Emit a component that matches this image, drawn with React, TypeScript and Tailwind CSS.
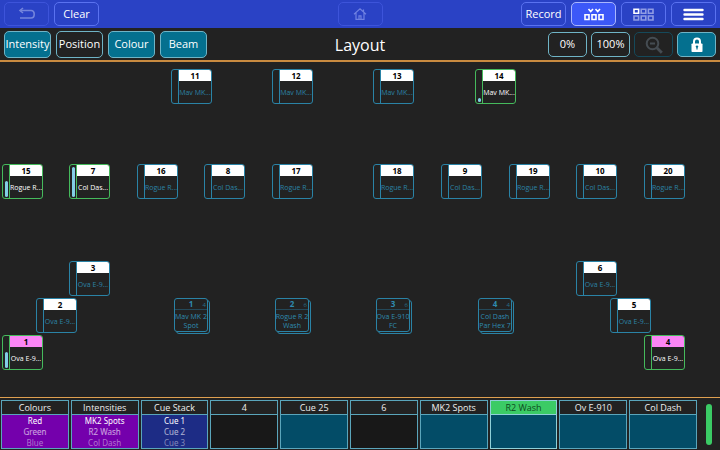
import type { ReactNode } from 'react';

type Fixture = {
  id: number;
  x: number;
  y: number;
  name: string;
  active?: boolean;
  level?: number;
  pink?: boolean;
};

const fixtures: Fixture[] = [
  { id: 11, x: 171, y: 7, name: 'Mav MK...' },
  { id: 12, x: 272, y: 7, name: 'Mav MK...' },
  { id: 13, x: 373, y: 7, name: 'Mav MK...' },
  { id: 14, x: 475, y: 7, name: 'Mav MK...', active: true, level: 4 },
  { id: 15, x: 2, y: 102, name: 'Rogue R...', active: true, level: 16 },
  { id: 7, x: 69, y: 102, name: 'Col Das...', active: true, level: 30 },
  { id: 16, x: 137, y: 102, name: 'Rogue R...' },
  { id: 8, x: 204, y: 102, name: 'Col Das...' },
  { id: 17, x: 272, y: 102, name: 'Rogue R...' },
  { id: 18, x: 373, y: 102, name: 'Rogue R...' },
  { id: 9, x: 441, y: 102, name: 'Col Das...' },
  { id: 19, x: 509, y: 102, name: 'Rogue R...' },
  { id: 10, x: 576, y: 102, name: 'Col Das...' },
  { id: 20, x: 644, y: 102, name: 'Rogue R...' },
  { id: 3, x: 69, y: 199, name: 'Ova E-9...' },
  { id: 2, x: 36, y: 236, name: 'Ova E-9...' },
  { id: 1, x: 2, y: 273, name: 'Ova E-9...', active: true, level: 16, pink: true },
  { id: 6, x: 576, y: 199, name: 'Ova E-9...' },
  { id: 5, x: 610, y: 236, name: 'Ova E-9...' },
  { id: 4, x: 644, y: 273, name: 'Ova E-9...', active: true, pink: true },
];

const groups = [
  { id: 1, x: 174, count: 4, lines: ['Mav MK 2', 'Spot'] },
  { id: 2, x: 275, count: 6, lines: ['Rogue R 2', 'Wash'] },
  { id: 3, x: 376, count: 6, lines: ['Ova E-910', 'FC'] },
  { id: 4, x: 478, count: 4, lines: ['Col Dash', 'Par Hex 7'] },
];

const playbacks = [
  { title: 'Colours', body: 'bg-[#7400ac]', cues: ['Red', 'Green', 'Blue'] },
  { title: 'Intensities', body: 'bg-[#7400ac]', cues: ['MK2 Spots', 'R2 Wash', 'Col Dash'] },
  { title: 'Cue Stack', body: 'bg-[#1d2c85]', cues: ['Cue 1', 'Cue 2', 'Cue 3'] },
  { title: '4', body: 'bg-[#181818]', cues: [] },
  { title: 'Cue 25', body: 'bg-[#034c67]', cues: [] },
  { title: '6', body: 'bg-[#181818]', cues: [] },
  { title: 'MK2 Spots', body: 'bg-[#034c67]', cues: [] },
  { title: 'R2 Wash', body: 'bg-[#034c67]', cues: [], selected: true },
  { title: 'Ov E-910', body: 'bg-[#034c67]', cues: [] },
  { title: 'Col Dash', body: 'bg-[#034c67]', cues: [] },
];

const cueTones = ['text-white', 'text-white/65', 'text-white/45'];

function TopButton({ children, label, tone = 'border-[#5a72f0]' }: { children: ReactNode; label: string; tone?: string }) {
  return (
    <button aria-label={label} className={`flex h-6 w-[45px] shrink-0 items-center justify-center rounded-[5px] border text-[11px] text-white ${tone}`}>
      {children}
    </button>
  );
}

function FilterButton({ label, on = true }: { label: string; on?: boolean }) {
  return (
    <button
      aria-pressed={on}
      className={`flex h-[27px] w-[47px] items-center justify-center whitespace-nowrap rounded-[5px] border border-[#6fb4c6] pt-px text-[11px] text-white ${on ? 'bg-[#04708f]' : 'bg-[#222222]'}`}
    >
      {label}
    </button>
  );
}

function ToolButton({ children, label, tone = 'border-[#6fb4c6]' }: { children: ReactNode; label: string; tone?: string }) {
  return (
    <button aria-label={label} className={`flex h-[25px] w-[39px] items-center justify-center rounded-[5px] border pt-px text-[11px] text-white ${tone}`}>
      {children}
    </button>
  );
}

function FixtureTile({ fixture }: { fixture: Fixture }) {
  const { id, x, y, name, active, level, pink } = fixture;
  const edge = active ? 'border-[#45ba5c]' : 'border-[#2a83a6]';
  return (
    <button
      className={`absolute flex h-[35px] w-[41px] overflow-hidden rounded-[3px] border bg-[#222222] ${edge}`}
      style={{ left: x, top: y }}
    >
      <span className={`flex h-full w-[7px] shrink-0 items-end justify-center border-r pb-px ${edge}`}>
        {level ? <span className="w-[3px] rounded-full bg-[#83cde6]" style={{ height: level }} /> : null}
      </span>
      <span className="flex h-full min-w-0 flex-1 flex-col">
        <span className={`flex h-[11px] items-center justify-center text-[8px] leading-[11px] font-bold text-black ${pink ? 'bg-[#fb85f5]' : 'bg-white'}`}>
          {id}
        </span>
        <span className={`flex flex-1 items-center justify-center whitespace-nowrap pt-px text-[7px] leading-[10px] ${active ? 'text-white' : 'text-[#2c83a5]'}`}>
          {name}
        </span>
      </span>
    </button>
  );
}

function GroupTile({ group }: { group: (typeof groups)[number] }) {
  return (
    <button className="absolute top-[236px] h-9 w-9 text-[#2f8bb0]" style={{ left: group.x }}>
      <span className="absolute top-[2px] left-[2px] h-[34px] w-[34px] rounded-[3px] border border-[#2a83a6]" />
      <span className="absolute top-0 left-0 flex h-[34px] w-[34px] flex-col rounded-[3px] border border-[#2a83a6] bg-[#222222]">
        <span className="relative block h-[11px] border-b border-[#24495a] text-center text-[8px] leading-[10px] font-bold">
          {group.id}
          <span className="absolute top-px right-px text-[6px] font-normal text-[#28708c]">{group.count}</span>
        </span>
        <span className="flex flex-1 flex-col items-center justify-center whitespace-nowrap text-[7px] leading-[9px]">
          {group.lines.map((line) => (
            <span key={line}>{line}</span>
          ))}
        </span>
      </span>
    </button>
  );
}

export default function App() {
  return (
    <div className="flex min-h-screen flex-col bg-[#222222] font-['Open_Sans','Noto_Sans',sans-serif] text-white">
      <header className="grid h-7 grid-cols-[1fr_auto_1fr] items-center bg-[#2a42c5] px-1">
        <div className="flex gap-[5px]">
          <TopButton label="Undo" tone="border-[#3d54da]">
            <svg viewBox="0 0 18 14" className="h-[14px] w-[18px]" fill="none" stroke="#7485dc" strokeWidth="1.6">
              <path d="M2 3.5h11q3.200 0 3.200 3.700t-3.200 3.800H2" />
              <path d="M5 1 2 3.500 5 6" />
            </svg>
          </TopButton>
          <TopButton label="Clear">Clear</TopButton>
        </div>
        <TopButton label="Home" tone="border-[#3d54da]">
          <svg viewBox="0 0 14 14" className="h-[14px] w-[14px]" fill="none" stroke="#6f81e2" strokeWidth="1.200">
            <path d="M1 7.200 7 1.800l6 5.400M3 6v6.300h8V6M10.500 4.800V2.500" />
            <path d="M6 12.300V8.800h2v3.500" />
          </svg>
        </TopButton>
        <div className="flex justify-end gap-[5px]">
          <TopButton label="Record">Record</TopButton>
          <TopButton label="Layout view" tone="border-[#a9b6ff] bg-[#3c58f8]">
            <svg viewBox="0 0 20 13" className="h-[13px] w-5" fill="none" stroke="white" strokeWidth="1.600">
              <path d="m4.500 1 2.200 2.500L9 1M11.500 1l2.200 2.500L16 1" />
              <path d="M1 6.800h4v4.700H1zM8 6.800h4v4.700H8zM15 6.800h4v4.700h-4z" />
            </svg>
          </TopButton>
          <TopButton label="Grid view">
            <svg viewBox="0 0 21 13" className="h-[13px] w-[21px]" fill="none" stroke="#8f9ce4" strokeWidth="1.600">
              <path d="M8.200 1.300h4.600v4H8.200zM15.400 1.300H20v4h-4.600zM1 8h4.600v4H1zM8.200 8h4.600v4H8.200zM15.400 8H20v4h-4.600z" />
              <path d="M1 1.300h4.600v4H1z" stroke="white" />
            </svg>
          </TopButton>
          <TopButton label="Menu">
            <svg viewBox="0 0 21 13" className="h-[13px] w-[21px]" stroke="white" strokeWidth="2.400" strokeLinecap="round">
              <path d="M1.500 2h18M1.500 6.500h18M1.500 11h18" />
            </svg>
          </TopButton>
        </div>
      </header>

      <section className="grid h-[34px] grid-cols-[1fr_auto_1fr] items-center border-b-2 border-[#c98b40] px-1">
        <div className="flex gap-[5px]">
          <FilterButton label="Intensity" />
          <FilterButton label="Position" on={false} />
          <FilterButton label="Colour" />
          <FilterButton label="Beam" />
        </div>
        <h1 className="pt-[2px] text-[16px] leading-5">Layout</h1>
        <div className="flex justify-end gap-1">
          <ToolButton label="Zero percent">0%</ToolButton>
          <ToolButton label="Full percent">100%</ToolButton>
          <ToolButton label="Zoom out" tone="border-[#15495a]">
            <svg viewBox="0 0 18 18" className="h-[18px] w-[18px]" fill="none" stroke="#454c52" strokeWidth="2">
              <circle cx="7.500" cy="7.500" r="5.800" />
              <path d="M5 7.500h5" />
              <path d="m11.800 11.800 5 5" strokeWidth="2.800" />
            </svg>
          </ToolButton>
          <ToolButton label="Lock" tone="border-[#6fb4c6] bg-[#04708f]">
            <svg viewBox="0 0 12 15" className="h-[15px] w-3">
              <path d="M3 7V4.500a3 3 0 0 1 6 0V7" fill="none" stroke="white" strokeWidth="2" />
              <rect x="0.500" y="6.500" width="11" height="8.500" rx="0.800" fill="white" />
              <circle cx="6" cy="9.600" r="1.200" fill="#04708f" />
              <path d="M6 10v2.600" stroke="#04708f" strokeWidth="1.200" />
            </svg>
          </ToolButton>
        </div>
      </section>

      <main className="relative min-h-[312px] flex-1">
        {fixtures.map((f) => (
          <FixtureTile key={f.id} fixture={f} />
        ))}
        {groups.map((g) => (
          <GroupTile key={g.id} group={g} />
        ))}
      </main>

      <footer className="flex items-center gap-[9px] border-t border-[#e0a050] pt-[2px] pr-2 pb-px pl-px">
        <div className="grid flex-1 grid-cols-10 gap-[2px]">
          {playbacks.map((p) => (
            <button
              key={p.title}
              className={`flex h-[49px] min-w-0 flex-col border text-center ${p.selected ? 'border-[#8fd0d8]' : 'border-[#5aa5bb]'}`}
            >
              <span className={`h-[14px] w-full border-b text-[9px] leading-[13px] ${p.selected ? 'border-[#8fd0d8] bg-[#3bcb65] text-[#0d4a20]' : 'border-[#5aa5bb] text-[#eeeeee]'}`}>
                {p.title}
              </span>
              <span className={`flex w-full flex-1 flex-col font-['Noto_Sans',sans-serif] text-[8px] leading-[11px] ${p.body}`}>
                {p.cues.map((cue, i) => (
                  <span key={cue} className={cueTones[i]}>
                    {cue}
                  </span>
                ))}
              </span>
            </button>
          ))}
        </div>
        <div className="h-[41px] w-[6px] rounded-full bg-[#3bcb65]" />
      </footer>
    </div>
  );
}
